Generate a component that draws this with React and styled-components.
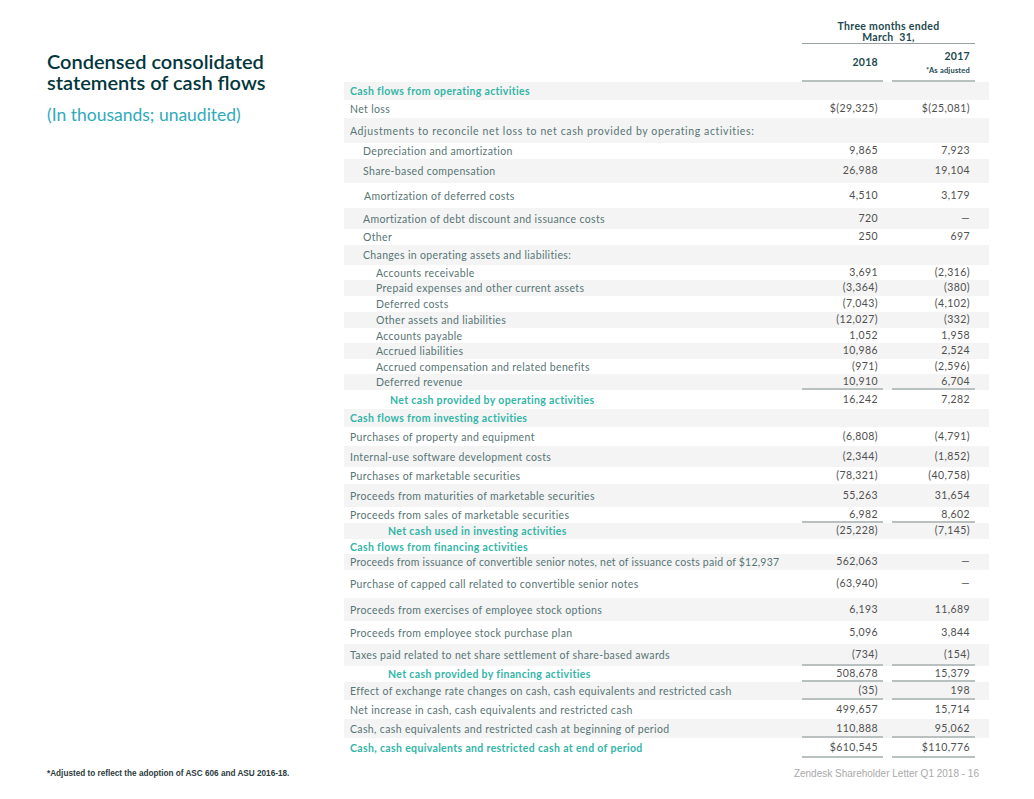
import styled, { createGlobalStyle } from "styled-components"

const GlobalStyle = createGlobalStyle`
  body {
    margin: 0;
    background: #ffffff;
    font-family: "Lato", "Liberation Sans", sans-serif;
  }
`

const Page = styled.div`
  width: 1034px;
  height: 799px;
  display: flex;
  flex-direction: column;
  background: #ffffff;
`

const Main = styled.div`
  display: flex;
  padding-left: 47px;
`

const Side = styled.div`
  width: 297px;
  padding-top: 51px;
`

const Title = styled.h1`
  margin: 0;
  font-family: "Lato", sans-serif;
  font-weight: 600;
  font-size: 20px;
  line-height: 21px;
  color: #03363d;
`

const Subtitle = styled.div`
  margin-top: 12px;
  font-size: 17.5px;
  line-height: 20px;
  color: #30aabc;
`

const Sheet = styled.div`
  width: 645px;
`

const HeadTop = styled.div`
  display: grid;
  grid-template-columns: 1fr 173px;
  padding-right: 14px;
`

const Period = styled.div`
  grid-column: 2;
  padding-top: 21px;
  text-align: center;
  font-size: 10.5px;
  line-height: 11px;
  letter-spacing: 0.3px;
  font-weight: 700;
  color: #1d4a50;
  border-bottom: 1px solid #9aa3a3;
`

const HeadBottom = styled.div`
  display: grid;
  grid-template-columns: 1fr 81px 83px;
  column-gap: 9px;
  padding-right: 14px;
`

const Year = styled.div`
  grid-column: ${props => props.col};
  height: 36px;
  display: flex;
  flex-direction: column;
  justify-content: center;
  align-items: flex-end;
  padding-right: 5px;
  border-bottom: 2px solid #b9c0c0;
  font-size: 10.5px;
  letter-spacing: 0.3px;
  font-weight: 700;
  color: #1d4a50;
`

const Note = styled.span`
  font-size: 7.5px;
  letter-spacing: 0.2px;
  margin-top: 4px;
`

const Row = styled.div`
  display: grid;
  grid-template-columns: 1fr 81px 83px;
  column-gap: 9px;
  padding-right: 14px;
  height: ${props => props.h}px;
  background: ${props => (props.shade ? "#f4f4f4" : "#ffffff")};
`

const Label = styled.div`
  display: flex;
  align-items: center;
  padding-left: ${props => 6 + props.indent}px;
  font-size: 10.5px;
  letter-spacing: ${props => props.spread}px;
  white-space: nowrap;
  color: ${props => (props.accent ? "#33b5a8" : "#577574")};
  font-weight: ${props => (props.accent ? 700 : 400)};
`

const Num = styled.div`
  display: flex;
  align-items: center;
  justify-content: flex-end;
  padding-right: 5px;
  font-size: 10.5px;
  letter-spacing: 0.4px;
  color: #505050;
  border-bottom: ${props => (props.rule ? "2px solid #b9c0c0" : "2px solid transparent")};
`

const Footer = styled.div`
  display: flex;
  justify-content: space-between;
  align-items: center;
  padding: 10px 55px 0 47px;
`

const FootNote = styled.span`
  font-family: "Liberation Sans Narrow", "Liberation Sans", sans-serif;
  font-size: 8.2px;
  font-weight: 700;
  color: #2c3b3d;
`

const PageMark = styled.span`
  font-family: "Liberation Sans Narrow", "Liberation Sans", sans-serif;
  font-size: 10px;
  color: #a9a9a9;
`

// [label, 2018, 2017, height, indent, accent, rule, spread]
const rows = [
  ["Cash flows from operating activities", "", "", 18, 0, true],
  ["Net loss", "$(29,325)", "$(25,081)", 18, 0],
  ["Adjustments to reconcile net loss to net cash provided by operating activities:", "", "", 25, 0, false, false, 0.62],
  ["Depreciation and amortization", "9,865", "7,923", 16, 13],
  ["Share-based compensation", "26,988", "19,104", 24, 13],
  ["Amortization of deferred costs", "4,510", "3,179", 25, 14],
  ["Amortization of debt discount and issuance costs", "720", "—", 21, 13],
  ["Other", "250", "697", 16, 13],
  ["Changes in operating assets and liabilities:", "", "", 20, 13],
  ["Accounts receivable", "3,691", "(2,316)", 15, 26],
  ["Prepaid expenses and other current assets", "(3,364)", "(380)", 16, 26],
  ["Deferred costs", "(7,043)", "(4,102)", 16, 26],
  ["Other assets and liabilities", "(12,027)", "(332)", 16, 26],
  ["Accounts payable", "1,052", "1,958", 15, 26],
  ["Accrued liabilities", "10,986", "2,524", 16, 26],
  ["Accrued compensation and related benefits", "(971)", "(2,596)", 15, 26],
  ["Deferred revenue", "10,910", "6,704", 16, 26, false, true],
  ["Net cash provided by operating activities", "16,242", "7,282", 19, 40, true],
  ["Cash flows from investing activities", "", "", 18, 0, true],
  ["Purchases of property and equipment", "(6,808)", "(4,791)", 19, 0],
  ["Internal-use software development costs", "(2,344)", "(1,852)", 21, 0],
  ["Purchases of marketable securities", "(78,321)", "(40,758)", 17, 0],
  ["Proceeds from maturities of marketable securities", "55,263", "31,654", 23, 0],
  ["Proceeds from sales of marketable securities", "6,982", "8,602", 16, 0, false, true],
  ["Net cash used in investing activities", "(25,228)", "(7,145)", 16, 38, true],
  ["Cash flows from financing activities", "", "", 15, 0, true],
  ["Proceeds from issuance of convertible senior notes, net of issuance costs paid of $12,937", "562,063", "—", 16, 0, false, false, 0.22],
  ["Purchase of capped call related to convertible senior notes", "(63,940)", "—", 28, 0],
  ["Proceeds from exercises of employee stock options", "6,193", "11,689", 23, 0],
  ["Proceeds from employee stock purchase plan", "5,096", "3,844", 23, 0],
  ["Taxes paid related to net share settlement of share-based awards", "(734)", "(154)", 22, 0, false, true],
  ["Net cash provided by financing activities", "508,678", "15,379", 16, 38, true, true],
  ["Effect of exchange rate changes on cash, cash equivalents and restricted cash", "(35)", "198", 18, 0, false, true],
  ["Net increase in cash, cash equivalents and restricted cash", "499,657", "15,714", 19, 0],
  ["Cash, cash equivalents and restricted cash at beginning of period", "110,888", "95,062", 19, 0, false, true],
  ["Cash, cash equivalents and restricted cash at end of period", "$610,545", "$110,776", 20, 0, true, true],
]

const App = () => {
  return (
    <Page>
      <GlobalStyle />

      <Main>
        <Side>
          <Title>
            Condensed consolidated
            <br />
            statements of cash flows
          </Title>
          <Subtitle>(In thousands; unaudited)</Subtitle>
        </Side>

        <Sheet>
          <HeadTop>
            <Period>
              Three months ended
              <br />
              March&nbsp; 31,
            </Period>
          </HeadTop>

          <HeadBottom>
            <Year col={2}>2018</Year>
            <Year col={3}>
              2017
              <Note>*As adjusted</Note>
            </Year>
          </HeadBottom>

          {rows.map(([label, a, b, h, indent, accent, rule, spread], i) => (
            <Row key={label} h={h} shade={i % 2 === 0}>
              <Label indent={indent} accent={accent} spread={spread ?? 0.35}>
                {label}
              </Label>
              <Num rule={rule}>{a}</Num>
              <Num rule={rule}>{b}</Num>
            </Row>
          ))}
        </Sheet>
      </Main>

      <Footer>
        <FootNote>*Adjusted to reflect the adoption of ASC 606 and ASU 2016-18.</FootNote>
        <PageMark>Zendesk Shareholder Letter Q1 2018 - 16</PageMark>
      </Footer>
    </Page>
  )
}

export default App
